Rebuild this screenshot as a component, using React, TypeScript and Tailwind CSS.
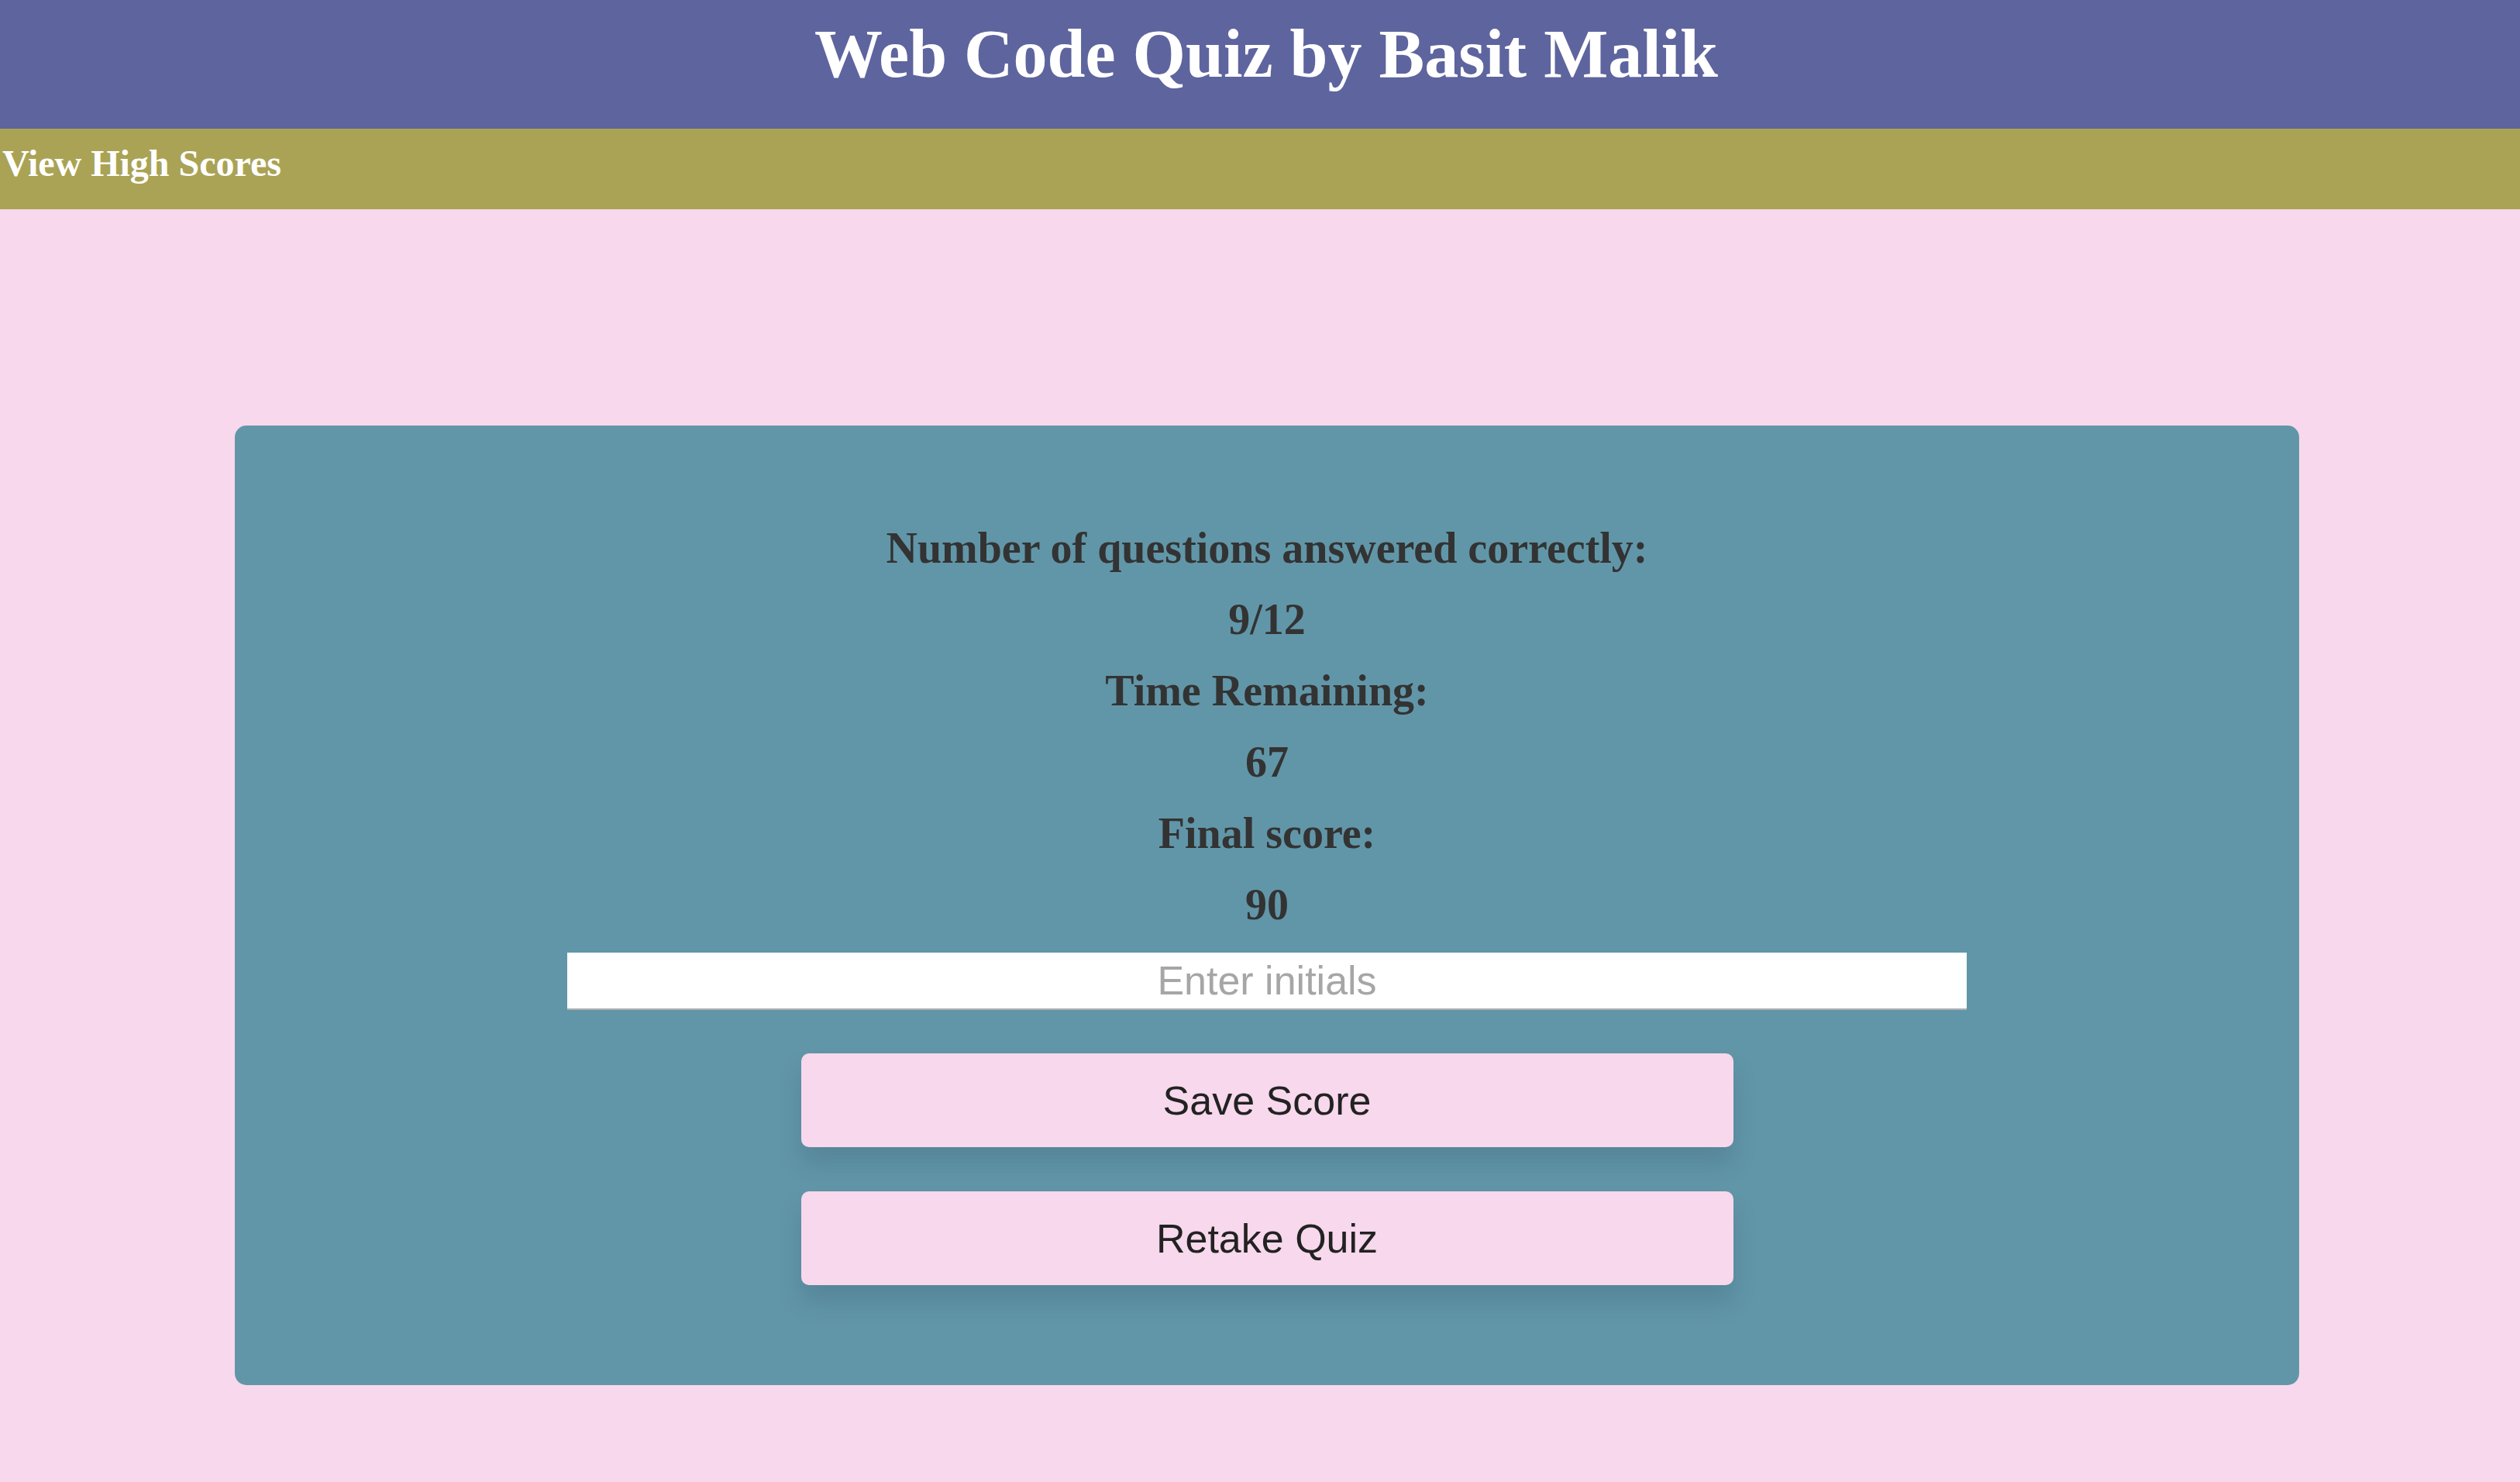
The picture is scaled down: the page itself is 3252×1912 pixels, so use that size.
import React from "react";

const serif = { fontFamily: '"Liberation Serif", "Times New Roman", serif' };

export default function App() {
  const lines = [
    "Number of questions answered correctly:",
    "9/12",
    "Time Remaining:",
    "67",
    "Final score:",
    "90",
  ];
  return (
    <div className="min-h-[1912px] w-full bg-[#f7d8ec]" style={serif}>
      <header className="h-[166px] bg-[#5e649e] pt-[26px] pl-[16px]">
        <h1 className="text-center text-[88px] leading-[88px] font-bold text-white font-['Liberation_Serif',serif]">
          Web Code Quiz by Basit Malik
        </h1>
      </header>
      <nav className="h-[104px] bg-[#aaa355] pt-[21px] pl-[3px]">
        <span className="text-[48px] leading-[48px] font-bold text-white font-['Liberation_Serif',serif]">
          View High Scores
        </span>
      </nav>
      <main className="pt-[279px]">
        <section className="ml-[303px] w-[2664px] h-[1238px] rounded-[15px] bg-[#6196a8] pt-[112px] flex flex-col items-center">
          {lines.map((t) => (
            <p
              key={t}
              className="text-center text-[56px] leading-[92px] font-bold text-[#333333] font-['Liberation_Serif',serif]"
            >
              {t}
            </p>
          ))}
          <input
            placeholder="Enter initials"
            className="mt-[16px] w-[1806px] h-[74px] bg-white text-center text-[52px] text-[#333] placeholder:text-[#a6a6a6] font-['Liberation_Sans',Arial,sans-serif] border-b-2 border-[#b0b0b0] outline-none"
          />
          <button className="mt-[56px] w-[1203px] h-[121px] rounded-[10px] bg-[#f7d8ec] text-[52px] text-[#222222] font-['Liberation_Sans',Arial,sans-serif] shadow-[0_22px_30px_rgba(40,60,90,0.18)]">
            Save Score
          </button>
          <button className="mt-[57px] w-[1203px] h-[121px] rounded-[10px] bg-[#f7d8ec] text-[52px] text-[#222222] font-['Liberation_Sans',Arial,sans-serif] shadow-[0_22px_30px_rgba(40,60,90,0.18)]">
            Retake Quiz
          </button>
        </section>
      </main>
    </div>
  );
}
